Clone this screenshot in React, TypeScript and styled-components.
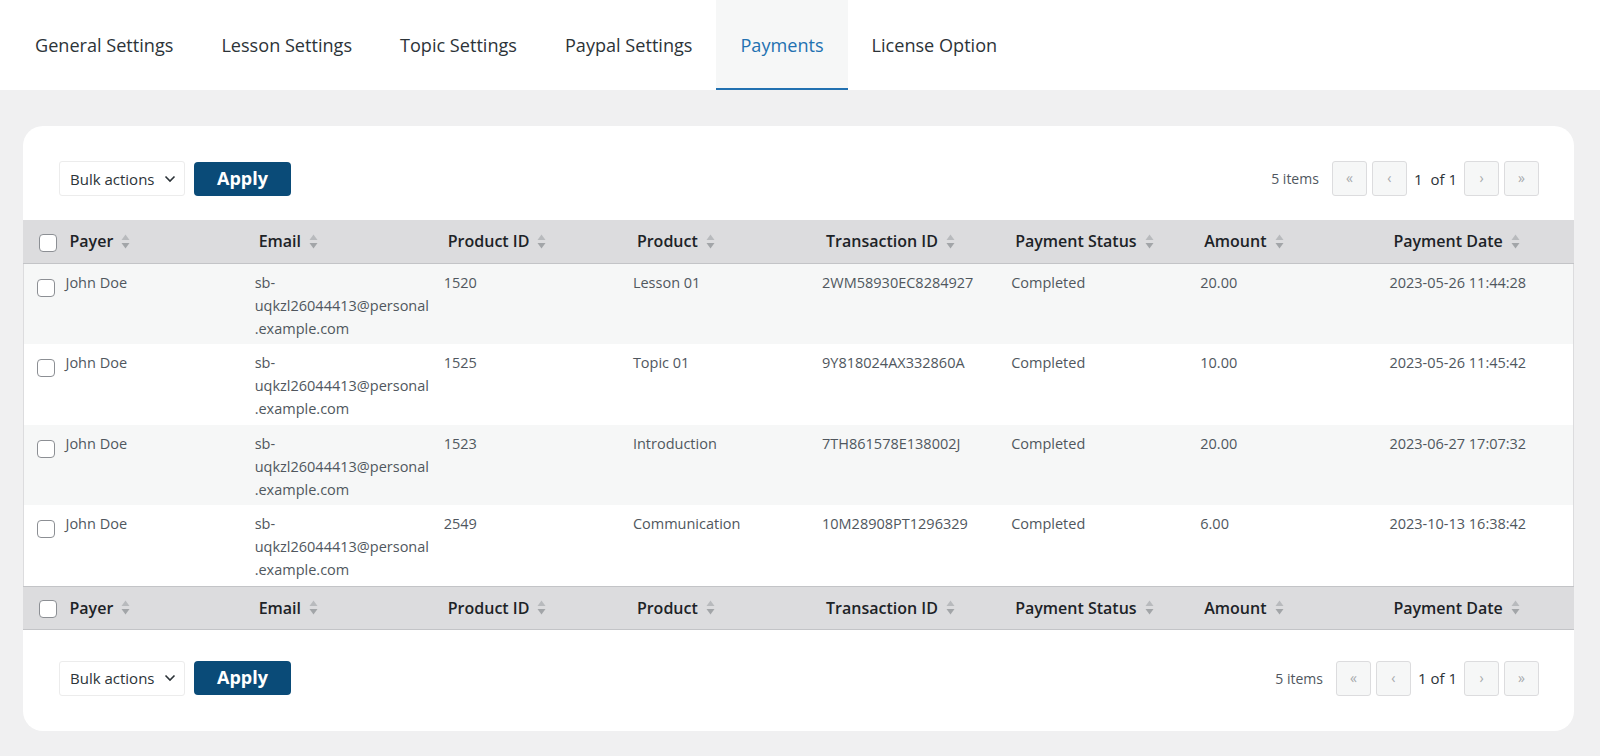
import React from "react";
import styled, { createGlobalStyle } from "styled-components";

const Global = createGlobalStyle`
  html, body { margin: 0; padding: 0; }
  body {
    background: #f0f0f1;
    font-family: "Open Sans", "Noto Sans", sans-serif;
    color: #1d2327;
  }
  * { box-sizing: border-box; }
`;

const Page = styled.div`
  min-height: 756px;
  display: flex;
  flex-direction: column;
`;

const TabBar = styled.nav`
  height: 90px;
  background: #ffffff;
  display: flex;
  align-items: stretch;
  padding-left: 11px;
`;

const Tab = styled.div<{ $active?: boolean }>`
  display: flex;
  align-items: center;
  padding: 2px 24px 0;
  font-size: 18.1px;
  font-weight: 500;
  color: ${(p) => (p.$active ? "#2271b1" : "#2c3338")};
  background: ${(p) => (p.$active ? "#f6f7f7" : "transparent")};
  border-bottom: 2px solid ${(p) => (p.$active ? "#2271b1" : "transparent")};
`;

const Card = styled.section`
  margin: 36px 26px 26px 23px;
  background: #ffffff;
  border-radius: 20px;
  padding: 35px 0;
  overflow: hidden;
`;

const Toolbar = styled.div<{ $bottom?: boolean }>`
  display: flex;
  align-items: center;
  justify-content: space-between;
  height: 35px;
  padding: 0 35px 0 36px;
  margin-top: ${(p) => (p.$bottom ? "31px" : "0")};
  margin-bottom: ${(p) => (p.$bottom ? "0" : "24px")};
`;

const Actions = styled.div`
  display: flex;
  align-items: center;
  gap: 9px;
`;

const Select = styled.div`
  width: 126px;
  height: 35px;
  border: 1px solid #ececec;
  border-radius: 3px;
  background: #fff;
  display: flex;
  align-items: center;
  gap: 10px;
  padding-left: 10px;
  font-size: 15px;
  color: #2c3338;
`;

const ApplyButton = styled.button`
  width: 97px;
  height: 34px;
  border: none;
  border-radius: 4px;
  background: #0a4b78;
  color: #ffffff;
  font-family: "Open Sans", "Noto Sans", sans-serif;
  font-size: 18px;
  font-weight: 700;
  padding: 0 0 2px;
  cursor: pointer;
`;

const Pager = styled.div`
  display: flex;
  align-items: center;
  gap: 5px;
  font-size: 14px;
  color: #50575e;
`;

const ItemCount = styled.span`
  margin-right: 8px;
`;

const PageButton = styled.span`
  width: 35px;
  height: 35px;
  border: 1px solid #dcdcde;
  border-radius: 3px;
  background: #f6f7f7;
  color: #a7aaad;
  display: flex;
  align-items: center;
  justify-content: center;
  font-size: 14px;
  padding-bottom: 2px;
`;

const PageInfo = styled.span`
  display: flex;
  align-items: center;
  font-size: 15px;
  color: #2c3338;
  padding: 0 2px;
`;

const CurrentPage = styled.span`
  padding-right: 8px;
`;

const Table = styled.table`
  width: 100%;
  border-collapse: collapse;
  table-layout: fixed;
  border-left: 1px solid #dcdcde;
  border-right: 1px solid #dcdcde;
`;

const HeadCell = styled.th<{ $foot?: boolean }>`
  height: 43px;
  background: #dcdcde;
  text-align: left;
  padding: 0 0 0 9px;
  font-size: 16px;
  font-weight: 600;
  color: #1d2327;
  border-bottom: 1px solid #c3c4c7;
  border-top: ${(p) => (p.$foot ? "1px solid #c3c4c7" : "none")};
  white-space: nowrap;
`;

const HeadCheckCell = styled(HeadCell)`
  padding: 3px 0 0 15px;
`;

const HeadLabel = styled.span`
  display: inline-flex;
  align-items: center;
  gap: 8px;
`;

const Row = styled.tr<{ $alt?: boolean }>`
  background: ${(p) => (p.$alt ? "#f6f7f7" : "#ffffff")};
`;

const Cell = styled.td`
  vertical-align: top;
  padding: 7px 5px 4.5px;
  font-size: 14.5px;
  line-height: 23px;
  color: #50575e;
`;

const CheckCell = styled.td`
  vertical-align: top;
  padding: 15px 0 0 13px;
`;

const Checkbox = styled.span`
  display: block;
  width: 18px;
  height: 18px;
  border: 1px solid #8c8f94;
  border-radius: 4px;
  background: #ffffff;
`;

const Line = styled.span`
  display: block;
  white-space: nowrap;
`;

const SortIcon = () => (
  <svg width="9" height="17" viewBox="0 0 9 17">
    <polygon points="0.5,7 4.5,1.5 8.5,7" fill="#b8babd" />
    <polygon points="0.5,10 8.5,10 4.5,15.5" fill="#a2a5a8" />
  </svg>
);

const Chevron = () => (
  <svg width="12" height="8" viewBox="0 0 12 8">
    <polyline points="1.5,1.5 6,6 10.5,1.5" fill="none" stroke="#2c3338" strokeWidth="1.6" />
  </svg>
);

const columns = [
  "Payer",
  "Email",
  "Product ID",
  "Product",
  "Transaction ID",
  "Payment Status",
  "Amount",
  "Payment Date",
];

type Payment = {
  payer: string;
  email: string[];
  productId: string;
  product: string;
  txn: string;
  status: string;
  amount: string;
  date: string;
};

const emailLines = ["sb-", "uqkzl26044413@personal", ".example.com"];

const payments: Payment[] = [
  { payer: "John Doe", email: emailLines, productId: "1520", product: "Lesson 01", txn: "2WM58930EC8284927", status: "Completed", amount: "20.00", date: "2023-05-26 11:44:28" },
  { payer: "John Doe", email: emailLines, productId: "1525", product: "Topic 01", txn: "9Y818024AX332860A", status: "Completed", amount: "10.00", date: "2023-05-26 11:45:42" },
  { payer: "John Doe", email: emailLines, productId: "1523", product: "Introduction", txn: "7TH861578E138002J", status: "Completed", amount: "20.00", date: "2023-06-27 17:07:32" },
  { payer: "John Doe", email: emailLines, productId: "2549", product: "Communication", txn: "10M28908PT1296329", status: "Completed", amount: "6.00", date: "2023-10-13 16:38:42" },
];

const tabs = ["General Settings", "Lesson Settings", "Topic Settings", "Paypal Settings", "Payments", "License Option"];

const HeaderRow = ({ foot }: { foot?: boolean }) => (
  <tr>
    <HeadCheckCell $foot={foot}>
      <Checkbox />
    </HeadCheckCell>
    {columns.map((c) => (
      <HeadCell key={c} $foot={foot}>
        <HeadLabel>
          {c}
          <SortIcon />
        </HeadLabel>
      </HeadCell>
    ))}
  </tr>
);

const TableNav = ({ bottom }: { bottom?: boolean }) => (
  <Toolbar $bottom={bottom}>
    <Actions>
      <Select>
        Bulk actions
        <Chevron />
      </Select>
      <ApplyButton>Apply</ApplyButton>
    </Actions>
    <Pager>
      <ItemCount>5 items</ItemCount>
      <PageButton>«</PageButton>
      <PageButton>‹</PageButton>
      {bottom ? (
        <PageInfo>1 of 1</PageInfo>
      ) : (
        <PageInfo>
          <CurrentPage>1</CurrentPage>of 1
        </PageInfo>
      )}
      <PageButton>›</PageButton>
      <PageButton>»</PageButton>
    </Pager>
  </Toolbar>
);

export default function App() {
  return (
    <Page>
      <Global />
      <TabBar>
        {tabs.map((t) => (
          <Tab key={t} $active={t === "Payments"}>
            {t}
          </Tab>
        ))}
      </TabBar>
      <Card>
        <TableNav />
        <Table>
          <colgroup>
            <col style={{ width: 37 }} />
            {columns.map((c) => (
              <col key={c} />
            ))}
          </colgroup>
          <thead>
            <HeaderRow />
          </thead>
          <tbody>
            {payments.map((p, i) => (
              <Row key={p.txn} $alt={i % 2 === 0}>
                <CheckCell>
                  <Checkbox />
                </CheckCell>
                <Cell>{p.payer}</Cell>
                <Cell>
                  {p.email.map((l) => (
                    <Line key={l}>{l}</Line>
                  ))}
                </Cell>
                <Cell>{p.productId}</Cell>
                <Cell>{p.product}</Cell>
                <Cell>{p.txn}</Cell>
                <Cell>{p.status}</Cell>
                <Cell>{p.amount}</Cell>
                <Cell>{p.date}</Cell>
              </Row>
            ))}
          </tbody>
          <tfoot>
            <HeaderRow foot />
          </tfoot>
        </Table>
        <TableNav bottom />
      </Card>
    </Page>
  );
}
